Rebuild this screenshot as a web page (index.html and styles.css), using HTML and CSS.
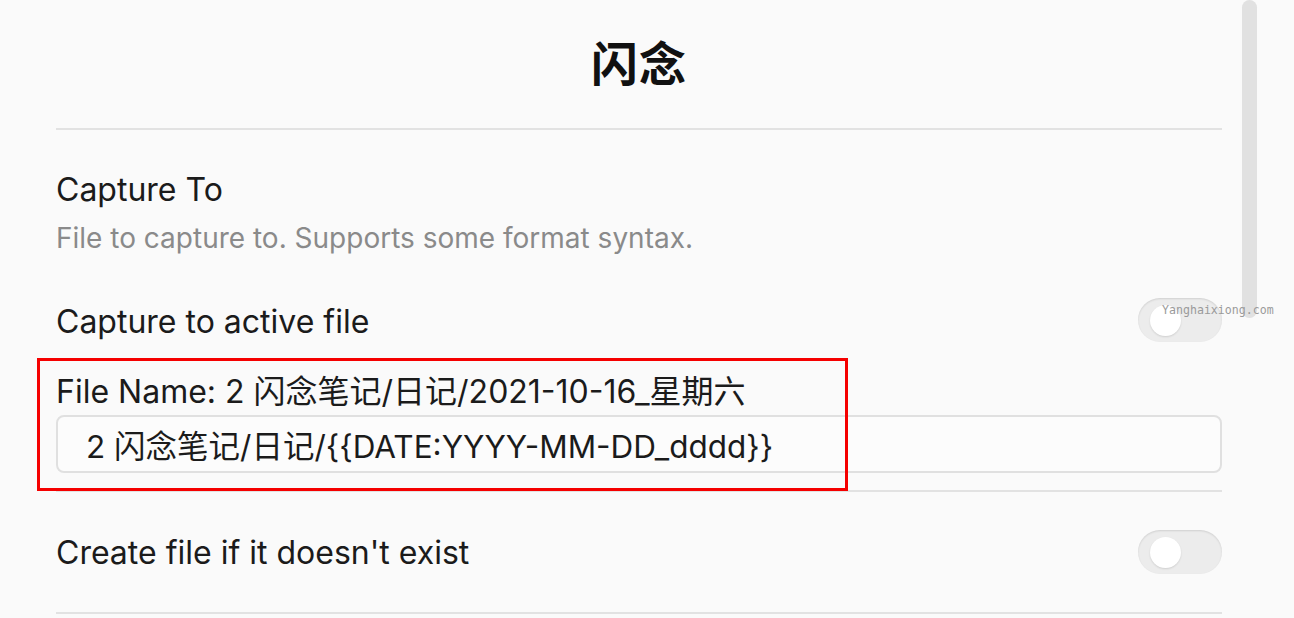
FILE: index.html
```html
<!DOCTYPE html>
<html lang="zh">
<head>
<meta charset="utf-8">
<title>闪念</title>
<link rel="stylesheet" href="styles.css">
</head>
<body>
<div class="page">
  <main class="panel">
    <h1 class="title">闪念</h1>
    <div class="rule"></div>

    <section class="setting setting-stack">
      <div class="name">Capture To</div>
      <div class="desc">File to capture to. Supports some format syntax.</div>
    </section>

    <section class="setting setting-row row-active">
      <div class="name">Capture to active file</div>
      <div class="toggle"><span class="knob"></span></div>
    </section>

    <section class="format">
      <div class="name">File Name: 2 闪念笔记/日记/2021-10-16_星期六</div>
      <div class="input">2 闪念笔记/日记/{{DATE:YYYY-MM-DD_dddd}}</div>
      <div class="highlight"></div>
    </section>
    <div class="rule"></div>

    <section class="setting setting-row row-create">
      <div class="name">Create file if it doesn't exist</div>
      <div class="toggle"><span class="knob"></span></div>
    </section>
    <div class="rule"></div>
  </main>
  <div class="scrollbar"><div class="thumb"></div></div>
  <div class="watermark">Yanghaixiong.com</div>
</div>
</body>
</html>
```

FILE: styles.css
```css
html, body {
  margin: 0;
  padding: 0;
  background: #fafafa;
}
body {
  font-family: Inter, "Noto Sans CJK SC", sans-serif;
  color: #1b1b1b;
  width: 1294px;
  height: 618px;
  overflow: hidden;
}
.page {
  position: relative;
  display: flex;
  height: 618px;
}
.panel {
  width: 1166px;
  margin-left: 56px;
  display: flex;
  flex-direction: column;
}
.title {
  margin: 0;
  height: 128px;
  display: flex;
  align-items: center;
  justify-content: center;
  padding-bottom: 8px;
  box-sizing: border-box;
  font-family: "Noto Sans CJK SC", sans-serif;
  font-size: 47px;
  font-weight: 700;
  color: #111;
  letter-spacing: 1px;
}
.rule {
  height: 2px;
  background: #e2e2e2;
  flex: none;
}
.name {
  font-size: 32px;
  line-height: 40px;
  color: #1b1b1b;
  white-space: nowrap;
}
.desc {
  font-size: 28px;
  line-height: 36px;
  color: #8a8a8a;
  margin-top: 10px;
  white-space: nowrap;
}
.setting-stack {
  padding-top: 40px;
}
.setting-row {
  display: flex;
  align-items: center;
  justify-content: space-between;
}
.row-active {
  margin-top: 42px;
}
.row-active .name {
  margin-top: 4px;
}
.row-create {
  margin-top: 38px;
  margin-bottom: 38px;
}
.row-create .name {
  margin-top: 2px;
}
.toggle {
  width: 84px;
  height: 44px;
  border-radius: 22px;
  background: #ececec;
  box-shadow: inset 0 1px 2px rgba(0,0,0,0.12);
  display: flex;
  align-items: center;
  padding-left: 12px;
  box-sizing: border-box;
  flex: none;
}
.knob {
  width: 31px;
  height: 31px;
  border-radius: 50%;
  background: #fff;
  box-shadow: 0 1px 2px rgba(0,0,0,0.12);
}
.format {
  position: relative;
  margin-top: 32px;
  padding-bottom: 17px;
}
.format .name {
  line-height: 36px;
}
.input {
  margin-top: 5px;
  height: 58px;
  box-sizing: border-box;
  border: 2px solid #e0e0e0;
  border-radius: 8px;
  background: #fcfcfc;
  padding-left: 28px;
  display: flex;
  align-items: center;
  font-size: 31.5px;
  color: #1b1b1b;
  white-space: nowrap;
}
.highlight {
  position: absolute;
  left: -19px;
  top: -16px;
  width: 811px;
  height: 133px;
  border: 3px solid #f50000;
  box-sizing: border-box;
  pointer-events: none;
}
.scrollbar {
  margin-left: 20px;
  width: 15px;
  flex: none;
}
.thumb {
  width: 15px;
  height: 318px;
  border-radius: 8px;
  background: #e1e1e1;
}
.watermark {
  position: absolute;
  left: 1162px;
  top: 302px;
  font-family: "DejaVu Sans Mono", monospace;
  font-size: 11.6px;
  color: #9a9a9a;
  line-height: 16px;
}
```
